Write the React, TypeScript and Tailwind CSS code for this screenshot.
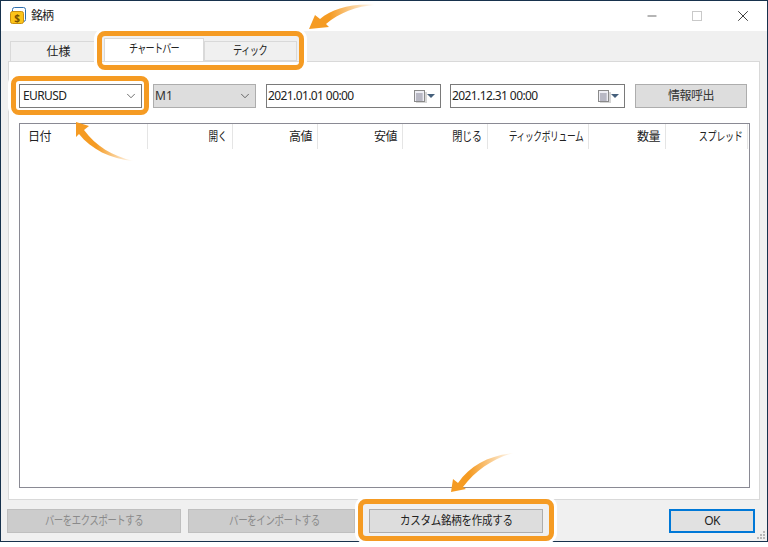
import { ChevronDown, X, Minus } from 'lucide-react';

const font = 'font-["Noto_Sans","Noto_Sans_CJK_JP",sans-serif]';

const columns = [
  { label: '日付', width: 'w-[128px]', inner: '', left: true },
  { label: '開く', width: 'w-[85px]', inner: 'scale-x-[0.8]' },
  { label: '高値', width: 'w-[85px]', inner: '' },
  { label: '安値', width: 'w-[85px]', inner: '' },
  { label: '閉じる', width: 'w-[85px]', inner: 'scale-x-[0.85]' },
  { label: 'ティックボリューム', width: 'w-[101px]', inner: 'scale-x-[0.73]' },
  { label: '数量', width: 'w-[77px]', inner: '' },
  { label: 'スプレッド', width: 'w-[82px]', inner: 'scale-x-[0.76]', last: true },
];

function CalendarIcon() {
  return (
    <svg width="22" height="13" viewBox="0 0 22 13">
      <rect x="2" y="2" width="11" height="11" fill="#c4c4c4" opacity="0.7" />
      <rect x="0.5" y="0.5" width="10" height="11" fill="#eeeef4" stroke="#8a8a8a" />
      <path d="M2 4h7M2 6h7M2 8h7M2 10h7M3 3v8M5 3v8M7 3v8" stroke="#a6a6b4" strokeWidth="1" />
      <path d="M13 4h8l-4 4z" fill="#46607c" />
    </svg>
  );
}

function DateField({ value, className }: { value: string; className: string }) {
  return (
    <div className={`flex h-[24px] items-center justify-between border border-[#7a7a7a] bg-white pl-[1px] pr-[4px] ${className}`}>
      <span className="text-[12px] tracking-[-0.6px] text-[#222]">{value}</span>
      <CalendarIcon />
    </div>
  );
}

function Highlight({ className }: { className: string }) {
  return (
    <div className={`pointer-events-none absolute rounded-[8px] border-[5px] border-[#f59b23] shadow-[0_0_0_3px_#ffffff] ${className}`} />
  );
}

export default function App() {
  return (
    <div className={`relative h-[547px] w-[768px] overflow-hidden bg-white ${font}`}>
      <div className="flex h-[542px] flex-col border border-[#17324d] bg-[#f0f0f0]">
        {/* title bar */}
        <div className="flex h-[30px] items-center bg-white pl-[9px]">
          <svg width="16" height="18" viewBox="0 0 16 18">
            <rect x="2.5" y="0.5" width="13" height="14" rx="2" fill="#ffffff" stroke="#2f6fae" />
            <rect x="0.5" y="4.5" width="13" height="12" rx="2" fill="#fcc419" stroke="#c98f10" />
            <text x="7" y="14.5" textAnchor="middle" fontSize="10" fontWeight="700" fill="#7a5200">$</text>
          </svg>
          <span className="ml-[5px] text-[12px] tracking-[-1px] text-[#222]">銘柄</span>
          <div className="ml-auto flex items-center">
            <Minus size={14} strokeWidth={1} className="mr-[33px] text-black" />
            <div className="mr-[32px] h-[10px] w-[10px] border border-[#c9c9c9]" />
            <X size={18} strokeWidth={1} className="mr-[15px] text-black" />
          </div>
        </div>

        {/* tabs */}
        <div className="flex h-[30px] items-end pl-[9px]">
          <div className="flex h-[20px] w-[88px] items-center justify-center border border-b-0 border-[#d9d9d9] bg-[#f0f0f0] pl-[9px] text-[12px] text-[#222]">仕様</div>
          <div className="ml-[6px] flex h-[23px] w-[100px] items-start justify-center border-x border-t border-[#d9d9d9] bg-white pt-[1px] text-[12px] tracking-[-1px] text-[#222]">
            <span className="inline-block scale-x-[0.76] whitespace-nowrap">チャートバー</span>
          </div>
          <div className="flex h-[20px] w-[93px] items-center justify-center border border-[#d9d9d9] bg-[#f0f0f0] text-[12px] tracking-[-0.8px] text-[#222]">
            <span className="inline-block scale-x-[0.77] whitespace-nowrap">ティック</span>
          </div>
        </div>

        {/* panel */}
        <div className="mx-[7px] flex h-[439px] w-[752px] flex-col border border-[#d9d9d9] bg-white pl-[10px] pr-[9px] pt-[22px]">
          <div className="flex h-[24px]">
            <div className="flex h-[24px] w-[123px] items-center justify-between border border-[#7a7a7a] bg-white pl-[3px] pr-[3px] text-[12px] tracking-[-0.6px] text-[#222]">
              EURUSD
              <ChevronDown size={14} strokeWidth={1.2} className="text-[#333]" />
            </div>
            <div className="ml-[11px] flex h-[24px] w-[103px] items-center justify-between border border-[#adadad] bg-[#dddddd] pl-[1px] pr-[3px] text-[12px] text-[#333]">
              M1
              <ChevronDown size={14} strokeWidth={1.2} className="text-[#333]" />
            </div>
            <DateField value="2021.01.01 00:00" className="ml-[10px] w-[175px]" />
            <DateField value="2021.12.31 00:00" className="ml-[9px] w-[175px]" />
            <div className="ml-[10px] flex h-[24px] w-[112px] items-center justify-center border border-[#adadad] bg-[#dddddd] text-[12px] tracking-[-0.5px] text-[#333]">情報呼出</div>
          </div>

          {/* table */}
          <div className="mt-[15px] h-[365px] w-[731px] border border-[#8a8a94] bg-white">
            <div className="flex h-[25px]">
              {columns.map((c) => (
                <div
                  key={c.label}
                  className={`flex ${c.width} items-center whitespace-nowrap border-r border-[#e5e5e5] text-[12px] tracking-[-0.5px] text-[#222] ${c.left ? 'justify-start pl-[8px]' : 'justify-end'} ${c.last ? 'pr-[4px]' : 'pr-[5px]'}`}
                >
                  <span className={`inline-block origin-right ${c.inner}`}>{c.label}</span>
                </div>
              ))}
            </div>
          </div>
        </div>

        {/* footer buttons */}
        <div className="relative flex h-[41px] items-start pl-[6px] pt-[9px]">
          <div className="flex h-[24px] w-[174px] items-center justify-center whitespace-nowrap border border-[#bfbfbf] bg-[#cccccc] text-[12px] tracking-[-0.5px] text-[#8a8a8a]">
            <span className="inline-block scale-x-[0.78]">バーをエクスポートする</span>
          </div>
          <div className="ml-[7px] flex h-[24px] w-[167px] items-center justify-center whitespace-nowrap border border-[#bfbfbf] bg-[#cccccc] pl-[6px] text-[12px] tracking-[-0.5px] text-[#8a8a8a]">
            <span className="inline-block scale-x-[0.79]">バーをインポートする</span>
          </div>
          <div className="ml-[14px] flex h-[24px] w-[174px] items-center justify-center whitespace-nowrap border border-[#adadad] bg-[#dddddd] text-[12px] tracking-[-0.3px] text-[#222]">
            <span className="inline-block scale-x-[0.875]">カスタム銘柄を作成する</span>
          </div>
          <div className="ml-[126px] flex h-[24px] w-[86px] items-center justify-center border-2 border-[#0078d7] bg-[#e1e1e1] text-[12px] tracking-[-0.6px] text-[#222]">OK</div>
        </div>
      </div>

      {/* callouts */}
      <Highlight className="left-[97px] top-[31px] h-[39px] w-[207px]" />
      <Highlight className="left-[11px] top-[76px] h-[39px] w-[138px]" />
      <Highlight className="left-[358px] top-[499px] h-[42px] w-[196px]" />

      <svg className="pointer-events-none absolute left-0 top-0" width="768" height="547" viewBox="0 0 768 547">
        <defs>
          <linearGradient id="fadeTop" x1="310" y1="0" x2="375" y2="0" gradientUnits="userSpaceOnUse">
            <stop offset="0.3" stopColor="#f59b23" />
            <stop offset="1" stopColor="#f59b23" stopOpacity="0" />
          </linearGradient>
          <linearGradient id="fadeLeft" x1="80" y1="0" x2="134" y2="0" gradientUnits="userSpaceOnUse">
            <stop offset="0.3" stopColor="#f59b23" />
            <stop offset="1" stopColor="#f59b23" stopOpacity="0" />
          </linearGradient>
          <linearGradient id="fadeBottom" x1="450" y1="0" x2="514" y2="0" gradientUnits="userSpaceOnUse">
            <stop offset="0.3" stopColor="#f59b23" />
            <stop offset="1" stopColor="#f59b23" stopOpacity="0" />
          </linearGradient>
        </defs>
        <path d="M309 29 L315 15 L320 19 C332 9 352 3 376 5 C356 6 339 13 326 24 L329 27 Z" fill="url(#fadeTop)" />
        <path d="M76 122 L89 126 L84 130 C96 146 112 156 134 161 C110 159 91 149 79 134 L76 137 Z" fill="url(#fadeLeft)" />
        <path d="M451 492 L453 479 L458 483 C470 465 490 455 514 453 C494 458 476 470 463 487 L466 489 Z" fill="url(#fadeBottom)" />
      </svg>

      {/* resize grip */}
      <div className="absolute left-[757px] top-[531px] grid h-[8px] w-[8px] grid-cols-3 gap-[1px]">
        <span /><span /><span className="bg-[#b8b8b8]" />
        <span /><span className="bg-[#b8b8b8]" /><span className="bg-[#b8b8b8]" />
        <span className="bg-[#b8b8b8]" /><span className="bg-[#b8b8b8]" /><span className="bg-[#b8b8b8]" />
      </div>
    </div>
  );
}
